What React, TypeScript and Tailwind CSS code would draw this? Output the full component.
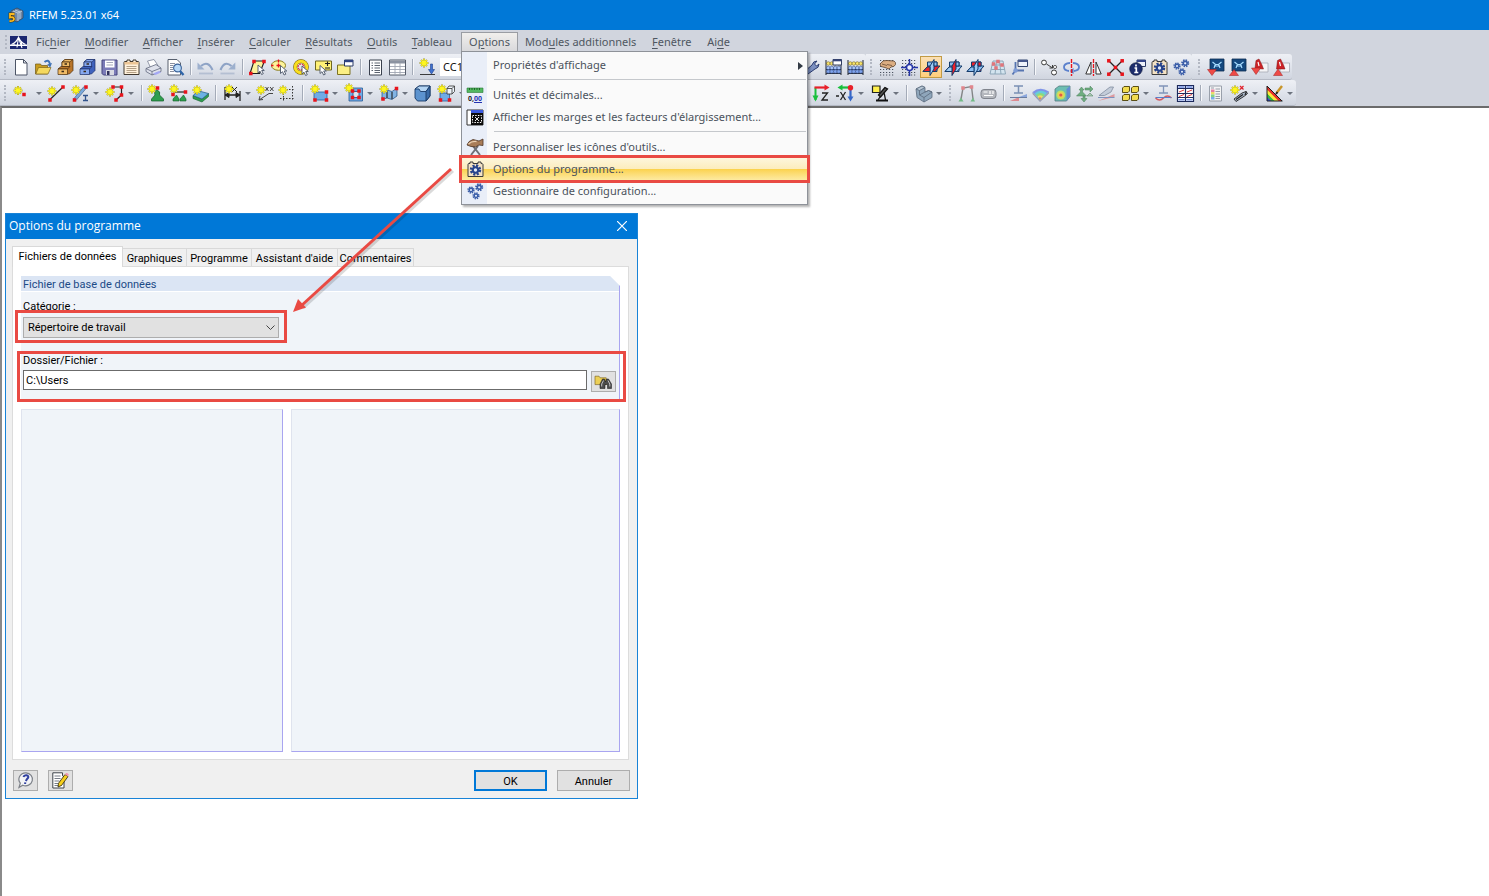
import type { ReactNode } from "react";

/* ---------- small drawing helpers ---------- */

function Star({ x = 0, y = 0 }: { x?: number; y?: number }) {
  return (
    <g transform={`translate(${x} ${y})`}>
      <path d="M4 -.5v9M-.5 4h9M1 1l6 6M7 1l-6 6" stroke="#a39a3a" strokeWidth="2" />
      <path d="M4 0v8M0 4h8M1.300 1.300l5.400 5.400M6.700 1.300l-5.400 5.400" stroke="#fff71e" strokeWidth="1.300" />
    </g>
  );
}

function Dots({ at, c = "#e8141c" }: { at: number[][]; c?: string }) {
  return (
    <>
      {at.map(([x, y]) => (
        <rect key={`${x}-${y}`} x={x - 1.75} y={y - 1.75} width="3.5" height="3.5" fill={c} />
      ))}
    </>
  );
}

function Cursor({ x = 0, y = 0 }: { x?: number; y?: number }) {
  return (
    <path
      transform={`translate(${x} ${y})`}
      d="M0 0v8l2-1.800 1.600 3.300 1.700-.8L3.700 5.500h2.600z"
      fill="#fff"
      stroke="#4a5568"
      strokeWidth=".9"
    />
  );
}

function Gear({ x, y, r, c = "#3a5da8" }: { x: number; y: number; r: number; c?: string }) {
  return (
    <>
      <circle cx={x} cy={y} r={r} fill="none" stroke={c} strokeWidth={r * 0.6} strokeDasharray={`${r * 0.47} ${r * 0.315}`} />
      <circle cx={x} cy={y} r={r * 0.62} fill="#e6eefb" stroke={c} strokeWidth={r * 0.5} />
    </>
  );
}

function Plane({ front, flat, side }: { front: string; flat: string; side: string }) {
  return (
    <g stroke="#123a6b" strokeWidth="1" strokeLinejoin="round">
      <path d="M4.500 3h9.500v9.500H4.500z" fill={front} />
      <path d="M0 12.500l5-5.500h12l-5 5.500z" fill={flat} />
      <path d="M7 7l4-6.500V10l-4 6.500z" fill={side} />
      <path d="M11 7h3V3h-3z" fill={front} />
      <path d="M0 12.500L4 8h3v4.500z" fill={flat} />
    </g>
  );
}

function Cabinet({ a, b, line }: { a: string; b: string; line: string }) {
  return (
    <g stroke={line} strokeWidth=".7" strokeLinejoin="round">
      <path d="M5 3l3-2.500h8V11.500L12.500 15H5z" fill={b} />
      <path d="M5 3l3-2.500h8L12.500 3z" fill={a} />
      <path d="M5 3h7.500v4.500H5z" fill={a} />
      <path d="M1 10l3-2.500h9L10.500 10z" fill={b} />
      <path d="M1 10h9.500v5.500H1z" fill={a} />
      <path d="M7.500 5h2.500M4.500 12.500h2.500" stroke="#3a2a18" strokeWidth="1.300" />
    </g>
  );
}

function Abacus({ flap }: { flap?: boolean }) {
  return (
    <g>
      <path d="M1 1v15M16 1v15M1 4.500h15M1 10.500h15M1 14.500h15" stroke="#2c3442" strokeWidth="1.100" />
      {[3.3, 6.8, 10.3, 13.8].map((x) => (
        <g key={x}>
          <circle cx={x} cy="4.500" r="1.800" fill="#f7e368" stroke="#66571d" strokeWidth=".5" />
          <circle cx={x} cy="9" r="1.800" fill="#a9c4f6" stroke="#1f3b80" strokeWidth=".5" />
          <circle cx={x} cy="12.500" r="1.800" fill="#7fa3ea" stroke="#1f3b80" strokeWidth=".5" />
        </g>
      ))}
      {flap && <path d="M8 .5h8.500v5.500H8z" fill="#fff" stroke="#323f63" />}
      {flap && <path d="M8 .5h8.500v1.800H8z" fill="#36457a" />}
    </g>
  );
}

function NavyModule() {
  return (
    <>
      <path d="M3 0h14v12H3z" fill="#14487f" stroke="#0b2c52" strokeWidth=".8" />
      <path d="M5.500 3l3 2.500h3L14.500 3M8.500 5.500L7 9M11.500 5.500L13 9M7 7h6" stroke="#a6dcff" strokeWidth="1.200" fill="none" />
    </>
  );
}

const gridDots = (
  <path
    d="M1 1.500h15M1 4.500h15M1 7.500h15M1 10.500h15M1 13.500h15M1 16h15"
    stroke="#4b5360"
    strokeWidth="1.200"
    strokeDasharray="1.200 1.800"
  />
);

const programGear = (
  <>
    <path d="M1 3.500q0-1 1-1h1V1h3v1.500h5V1h3v1.500q2 0 2 1v12H1z" fill="#f5e3c4" stroke="#3b3b3b" />
    <Gear x={8.5} y={9} r={4.400} c="#27448c" />
  </>
);

const threeGears = (
  <>
    <Gear x={4} y={7} r={2.800} />
    <Gear x={12.2} y={4.300} r={3.100} />
    <Gear x={9} y={12.800} r={2.800} />
  </>
);

const folder = <path d="M0 4h5l1.500 2H14v8.500H0z" fill="#eccf55" stroke="#79601a" strokeWidth=".8" />;

const icons: Record<string, ReactNode> = {
  newFile: <path d="M2.500.5h8l3.500 3.500v12H2.500zM10.500.5V4H14" fill="#fff" stroke="#4c5566" />,
  open: (
    <>
      <path d="M.5 5h5l1 1.500h6V15H.5z" fill="#c89c1e" stroke="#6f5714" strokeWidth=".7" />
      <path d="M3.500 8.500h12.500L13 15H.8z" fill="#f5d95f" stroke="#80661c" strokeWidth=".7" />
      <path d="M9.500 3q4-3.500 5.500 2" fill="none" stroke="#3f72b5" strokeWidth="2" />
      <path d="M17 4l-1.800 4.500-3-3z" fill="#3f72b5" />
    </>
  ),
  cabinet: <Cabinet a="#efba66" b="#b9752a" line="#4c2f10" />,
  cabinetBlue: <Cabinet a="#86a8ef" b="#3f62bd" line="#1e2f66" />,
  save: (
    <>
      <path d="M1 1h15v15H2.500L1 14.500z" fill="#7c7cb8" stroke="#45457c" />
      <path d="M4 1.500h9.500v7H4z" fill="#fff" />
      <path d="M5.500 3.500h6.500M5.500 6h6.500" stroke="#a5a8ba" />
      <path d="M5 11h8v5H5z" fill="#d9dbe3" />
      <path d="M6 12h2.500v4H6z" fill="#30315c" />
    </>
  ),
  clipboard: (
    <>
      <path d="M1 3.500q0-1 1-1h2V1h3v1.500h3V1h3v1.500h2q1 0 1 1v12H1z" fill="#fff1dc" stroke="#40382e" />
      <path d="M1.500 3h14v2.500h-14z" fill="#ecc595" />
      <path d="M3.500 7.500h10M3.500 9.500h10M3.500 11.500h10M3.500 13.500h10" stroke="#a08a6e" strokeWidth=".8" />
    </>
  ),
  print: (
    <g strokeLinejoin="round">
      <path d="M2.500 2L9 .5l4 6-7 3z" fill="#fff" stroke="#7a8196" strokeWidth=".8" />
      <path d="M1 9.500L11 5.500l5 3.500v3.500L7 16l-6-3.500z" fill="#dfe2ec" stroke="#60677c" strokeWidth=".8" />
      <path d="M1 9.500L7 12.500 16 9M7 12.500V16" fill="none" stroke="#60677c" strokeWidth=".8" />
      <path d="M8 14.500l6-2.500 2 1.500-5.500 2.500z" fill="#a4a8f4" />
    </g>
  ),
  preview: (
    <>
      <path d="M1 .5h9L13.500 4v12H1z" fill="#fff" stroke="#59616f" />
      <path d="M3 4.500h5M3 6.500h3.500M3 8.500h3M3 10.500h3M3 12.500h4" stroke="#8a90a0" />
      <circle cx="10.500" cy="9" r="3.900" fill="#b7d8f8" stroke="#3c6299" strokeWidth="1.100" />
      <path d="M13 12l3.500 4" stroke="#2f65a8" strokeWidth="2.400" />
    </>
  ),
  undo: (
    <>
      <path d="M4 7q7-6 11.500 4" fill="none" stroke="#8ea3c6" strokeWidth="2.200" />
      <path d="M.5 3.500v7h7z" fill="#9db0ce" />
      <path d="M2 14.500h14" stroke="#b4bfd2" strokeWidth="1.800" />
    </>
  ),
  redo: (
    <>
      <path d="M12.500 7Q5.500 1 1.500 11" fill="none" stroke="#8ea3c6" strokeWidth="2.200" />
      <path d="M16.300 3.500v7H9.300z" fill="#9db0ce" />
      <path d="M1.500 14.500h14" stroke="#b4bfd2" strokeWidth="1.800" />
    </>
  ),
  selPara: (
    <>
      <path d="M5 2h10.500L10.500 14.500H1z" fill="#fdf49a" stroke="#1d1d1d" strokeWidth="1.100" />
      <Dots at={[[5, 2.500], [15, 2.500], [1.800, 14.500]]} />
      <Cursor x={9} y={6} />
    </>
  ),
  selEllipse: (
    <>
      <ellipse cx="7.500" cy="6.500" rx="7" ry="4.800" fill="#fdf49a" stroke="#8a7b1d" />
      <path d="M7.500 4.500v4M5.500 6.500h4M7.500 .5v3M0 6.500h2.500" stroke="#e8141c" strokeWidth="1.300" />
      <Cursor x={9.500} y={6.500} />
    </>
  ),
  selRing: (
    <>
      <circle cx="8" cy="8" r="5.800" fill="none" stroke="#6d5a00" strokeWidth="4" />
      <circle cx="8" cy="8" r="5.800" fill="none" stroke="#f9de20" strokeWidth="3" />
      <circle cx="8" cy="8" r="3" fill="none" stroke="#e0202a" strokeWidth="1.200" strokeDasharray="2 1" />
      <Cursor x={9} y={7} />
    </>
  ),
  selPlus: (
    <>
      <path d="M.5 2h16v9H.5z" fill="#fff176" stroke="#6f6721" />
      <path d="M10 4.500h5M12.500 2.500v4.500M10 9h5" stroke="#1d1d1d" strokeWidth="1.100" />
      <Cursor x={5} y={6.500} />
    </>
  ),
  selWindow: (
    <>
      <path d="M.5 6h12.500v9.500H.5z" fill="#fbef84" stroke="#7d7323" />
      <path d="M7.500 1h8.500v6H7.500z" fill="#fff" stroke="#2b3a66" />
      <path d="M7.500 1h8.500v2.200H7.500z" fill="#2e4384" />
    </>
  ),
  listPage: (
    <>
      <path d="M2.500 1h12v15h-12z" fill="#fff" stroke="#39404d" />
      <path d="M4.500 4H6M4.500 6.500H6M4.500 9H6M4.500 11.500H6M7.500 4H13M7.500 6.500H13M7.500 9H13M7.500 11.500H13M7.500 13.500H13" stroke="#4b525f" strokeWidth=".9" />
    </>
  ),
  table: (
    <>
      <path d="M.5 1h16v15H.5z" fill="#fff" stroke="#555c69" />
      <path d="M1 1.500h15v3H1z" fill="#8c93a1" />
      <path d="M1 7.500h15M1 10.500h15M1 13.500h15M6 4v12M11 4v12" stroke="#a0a6b2" strokeWidth=".9" />
    </>
  ),
  newLoad: (
    <>
      <Star x={1} y={0} />
      <path d="M11.500 5v5.500H9.500l3 4.500 3-4.500h-2V5z" fill="#3e70cf" stroke="#1e3f8c" strokeWidth=".6" />
      <path d="M1 15.500h15" stroke="#3b3b3b" />
    </>
  ),
  wrench: <path d="M2 12l7-6q1-4 5-4l-2.500 3 2 2L16 5q0 4-4 5l-7 5z" fill="#7b8fc0" stroke="#2b3c70" />,
  abacusFlap: <Abacus flap />,
  abacus: <Abacus />,
  gridHand: (
    <>
      {gridDots}
      <path d="M1 5q3-4.500 7-3.500l7 .5q2 1 1.500 3.500-1 2.500-4.500 2.500L10 10 6 8.500 2 7.500z" fill="#dcae82" stroke="#5a4330" strokeWidth=".8" />
      <path d="M8 5.500l5 1M3 5l5 1.500" stroke="#6b4c34" strokeWidth=".8" />
    </>
  ),
  gridCross: (
    <>
      {gridDots}
      <path d="M8.500 0v17M0 8.500h17" stroke="#2636a8" strokeWidth="1.500" />
      <circle cx="8.500" cy="8.500" r="3" fill="#eef2ff" stroke="#2636a8" strokeWidth="1.500" />
    </>
  ),
  planeXY: <Plane front="#8dbff0" flat="#ee2028" side="#9dcbf4" />,
  planeYZ: <Plane front="#8dbff0" flat="#9dcbf4" side="#ee2028" />,
  planeXZ: <Plane front="#ee2028" flat="#8dbff0" side="#9dcbf4" />,
  gridPersp: (
    <>
      <path d="M4 2h10l2.500 13H1zM3.300 6h11.500M2.300 10.500h13.200M7.500 2L6 15M10.500 2L12 15" fill="#d3e4ef" stroke="#86a0b3" strokeWidth=".9" />
      <Dots at={[[4.500, 5], [9, 2.500], [13, 6], [7, 9]]} c="#e0767c" />
    </>
  ),
  axesWindow: (
    <>
      <path d="M7 1h9.500v6.500H7z" fill="#eef2fb" stroke="#33446f" />
      <path d="M7 1h9.500v2H7z" fill="#46578c" />
      <path d="M4.500 3v8.500H13M4.500 11.500l-3 4" fill="none" stroke="#5674b0" strokeWidth="1.800" />
      <circle cx="4.500" cy="11.500" r="2.200" fill="#7f9cd6" />
    </>
  ),
  circlesLink: (
    <>
      <circle cx="3" cy="3.500" r="2.400" fill="#fff" stroke="#3b3b3b" />
      <circle cx="13" cy="13.500" r="2.500" fill="#fff" stroke="#3b3b3b" />
      <path d="M5.500 5l6 4M11.500 9V6M11.500 9H8.500" fill="none" stroke="#3b3b3b" />
      <circle cx="14" cy="8" r="1.600" fill="#fff" stroke="#3b3b3b" strokeWidth=".8" />
    </>
  ),
  rotate: (
    <>
      <path d="M7 4Q1 4.500 1 8t5 4M10 4q6 .5 6 4t-5 4" fill="none" stroke="#5b80cc" strokeWidth="1.800" />
      <path d="M10.500 9v6L7 12z" fill="#4b72c4" />
      <path d="M8.500 0v17" stroke="#e8141c" strokeWidth="1.400" strokeDasharray="4 1" />
    </>
  ),
  mirror: (
    <>
      <path d="M6 3v12H.8zM11 3v12h5.200z" fill="#fff" stroke="#333" />
      <path d="M8.500 0v17" stroke="#e8141c" strokeWidth="1.300" strokeDasharray="4 1" />
    </>
  ),
  crossNodes: (
    <>
      <path d="M1.500 1.500l14 14M15.500 1.500l-14 14" stroke="#222" strokeWidth="1.300" />
      <Dots at={[[1.800, 1.800], [15.200, 1.800], [1.800, 15.200], [15.200, 15.200], [8.500, 8.500]]} />
    </>
  ),
  info: (
    <>
      <path d="M8 1h8.500v6.500H8z" fill="#eef1fa" stroke="#2b3a66" />
      <path d="M8 1h8.500v2H8z" fill="#34458a" />
      <circle cx="7" cy="10" r="6.300" fill="#1c2c6c" stroke="#0e1738" strokeWidth=".6" />
      <path d="M7 5.500v2M5.500 9H7.300V13.500M5.300 13.500h4" stroke="#fff" strokeWidth="1.700" fill="none" />
    </>
  ),
  programGear,
  threeGears,
  mod1: (
    <>
      <NavyModule />
      <path d="M.5 10.500h9L5 16.500z" fill="#ee4a46" stroke="#a11e1e" strokeWidth=".5" />
    </>
  ),
  mod2: (
    <>
      <NavyModule />
      <path d="M.5 16.500h9L5 10.500z" fill="#ee4a46" stroke="#a11e1e" strokeWidth=".5" />
    </>
  ),
  pdf1: (
    <>
      <path d="M8 4h9v9H8z" fill="#f4f4f6" stroke="#a6a9b4" strokeWidth=".8" />
      <path d="M4 9.500L5 1.500 8 0l3 6 1.500 4z" fill="#cc2226" stroke="#7d1214" strokeWidth=".5" />
      <path d="M7 3l1 4" stroke="#fff" strokeWidth="1.200" />
      <path d="M.5 9h9L5 15.500z" fill="#ee4a46" stroke="#a11e1e" strokeWidth=".5" />
    </>
  ),
  pdf2: (
    <>
      <path d="M7 4h9.500v9H7z" fill="#f4f4f6" stroke="#a6a9b4" strokeWidth=".8" />
      <path d="M3.500 10L4.500 1.500 7.500 0l3 6 1.500 4z" fill="#cc2226" stroke="#7d1214" strokeWidth=".5" />
      <path d="M6.500 3l1 4" stroke="#fff" strokeWidth="1.200" />
      <path d="M.5 16.500h9L5 10z" fill="#ee4a46" stroke="#a11e1e" strokeWidth=".5" />
    </>
  ),

  node: (
    <>
      <Star x={-1} y={1.5} />
      <Dots at={[[9, 9.500]]} />
    </>
  ),
  line: (
    <>
      <path d="M2 14.500L15 2" stroke="#222" strokeWidth="1.200" />
      <Star x={0} y={2} />
      <Dots at={[[2, 15], [15, 2]]} />
    </>
  ),
  member: (
    <>
      <path d="M1.500 14L12 1.500l2.500 1.500L4 15.500z" fill="#79a9dc" stroke="#47658e" strokeWidth=".7" />
      <Star x={0} y={1} />
      <Dots at={[[14, 2], [2.500, 15]]} />
      <path d="M11 10.500h5M13.500 10.500v5M11 15.500h5" stroke="#31538b" strokeWidth="1.300" />
    </>
  ),
  polyline: (
    <>
      <path d="M5.500 2h9v8L9 15" fill="none" stroke="#222" strokeWidth="1.200" />
      <Star x={-1} y={3} />
      <Dots at={[[6, 2], [14.500, 2], [14.500, 10], [9, 15]]} />
    </>
  ),
  support: (
    <>
      <path d="M9 5q4 1.500 2.500 5l4 4v2h-12v-2l3.500-4Q5.500 6 9 5z" fill="#2f9e4e" stroke="#115c28" strokeWidth=".7" />
      <Star x={0} y={0} />
      <Dots at={[[9.500, 3]]} />
    </>
  ),
  lineSupport: (
    <>
      <path d="M3 7h12" stroke="#222" strokeWidth="1.200" />
      <Star x={0} y={0} />
      <Dots at={[[15.500, 7], [3, 9.500]]} />
      <path d="M6.500 10l2.500 4v2H3v-2zM13.500 10l2.500 4v2h-6v-2z" fill="#2f9e4e" stroke="#115c28" strokeWidth=".6" />
    </>
  ),
  surfSupport: (
    <>
      <path d="M1 10.500L10 14l6.500-5.500v3L10 17l-9-3.500z" fill="#2f9e4e" stroke="#115c28" strokeWidth=".6" />
      <path d="M1 10.500l6-4.500 9.500 2.500L10 14z" fill="#6cb2e4" stroke="#215a80" strokeWidth=".7" />
      <Star x={1} y={1} />
    </>
  ),
  dimension: (
    <>
      <path d="M1 2v13M16 6v10M1 10h15" stroke="#222" strokeWidth="1.300" />
      <path d="M1 10l4-2.500v5zM16 10l-4-2.500v5zM8 2l5 5M13 2L8 7" stroke="#222" fill="#222" />
      <Star x={1} y={0} />
    </>
  ),
  annotate: (
    <>
      <path d="M2 15L12 8.500h4M2 15l1-4M2 15l4-.5" stroke="#444" fill="none" />
      <path d="M8.500 2l3 4M11.500 2l-3 4M13 2l3.500 4M16.500 2L13 6" stroke="#333" strokeWidth=".9" />
      <Star x={0} y={1} />
    </>
  ),
  gridNew: (
    <>
      <path d="M4.500 2v14M13.500 1v15M1 4.500h15M1 13.500h15" stroke="#333" strokeDasharray="1.500 1.500" />
      <Star x={0} y={1} />
    </>
  ),
  surface: (
    <>
      <path d="M3 7h13v8H3z" fill="#6fabe6" stroke="#2a5c96" strokeWidth=".8" />
      <Star x={0} y={0} />
      <Dots at={[[15.500, 7], [15.500, 15], [4, 15]]} />
    </>
  ),
  opening: (
    <>
      <path d="M3 3h13.500v13H3z" fill="#6fabe6" stroke="#2a5c96" strokeWidth=".8" />
      <path d="M7 6.500h6v6H7z" fill="#dfe6f0" stroke="#1f4a7d" strokeWidth=".8" />
      <Star x={-1} y={-1} />
      <Dots at={[[6.500, 6], [13, 6], [6.500, 12.500], [13, 12.500]]} />
    </>
  ),
  surfaceMember: (
    <>
      <path d="M1 6.500l5-1.500 5 1.500L16 3v8l-5 3.500L6 13l-5 1.500z" fill="#82b4e4" stroke="#1f4a7d" strokeWidth=".7" />
      <path d="M6 13V6M11 14V7" stroke="#222" strokeWidth="1.100" />
      <Star x={-1} y={0} />
      <Dots at={[[15.500, 3.500], [2, 14]]} />
    </>
  ),
  solid: (
    <g stroke="#183a66" strokeWidth=".9" strokeLinejoin="round">
      <path d="M1 4l4-3h11v10L12 16H3.500L1 13z" fill="#5c93cf" />
      <path d="M1 4h4l1.500 2.500H12L16 1H5z" fill="#b4d5f4" />
      <path d="M12 6.500V16l4-5V1z" fill="#3a6ca8" />
    </g>
  ),
  solidNew: (
    <>
      <path d="M2 8h9.500v8H2z" fill="#6fabe6" stroke="#2a5c96" strokeWidth=".8" />
      <path d="M9 3.500h5V9H9zM9 3.500l2-2.500h5.500v5.500L14 9M14 3.500L16.500 1" fill="#eef4fb" stroke="#333" strokeWidth=".8" />
      <Star x={0} y={0} />
      <Dots at={[[11.500, 15], [2.500, 15]]} />
    </>
  ),
  viewZ: (
    <>
      <path d="M2.500 15V2.500" stroke="#18c03c" strokeWidth="2" />
      <path d="M1.500 2.500H13" stroke="#e8202a" strokeWidth="2.200" />
      <path d="M11.500 -.5l5 3-5 3z" fill="#e8202a" />
      <path d="M-.5 10.500h6L2.500 16.500z" fill="#18c03c" />
      <path d="M9 8h5.500L9 15h6" fill="none" stroke="#222" strokeWidth="1.300" />
    </>
  ),
  viewX: (
    <>
      <path d="M13.500 2.500H4" stroke="#18c03c" strokeWidth="2.200" />
      <path d="M5.500 -.5l-5 3 5 3z" fill="#18c03c" />
      <path d="M13.500 3v10" stroke="#3567c8" strokeWidth="2.200" />
      <path d="M10.500 11.500h6l-3 5z" fill="#3567c8" />
      <circle cx="13.500" cy="2.800" r="2.700" fill="#e8202a" />
      <path d="M-1 11h3M3.500 7l5 8M8.500 7l-5 8" stroke="#222" strokeWidth="1.300" />
    </>
  ),
  lamp: (
    <>
      <path d="M13 2.500L6.500 10l2 2L15.500 4zM8 12l-2 3M12 7l1.500 8" stroke="#111" strokeWidth="1.300" fill="#555" />
      <path d="M4 15.500h12" stroke="#111" strokeWidth="2" />
      <path d="M.5 1H8v6.500H.5z" fill="#fff04e" stroke="#222" strokeWidth="1.200" />
    </>
  ),
  solidGray: (
    <g stroke="#5b6a7c" strokeWidth=".8" strokeLinejoin="round">
      <path d="M1 4l6-3 3 1.500V7l3.500-1.500L17 7v5.500L9 17l-7-4.500z" fill="#8fa6bb" />
      <path d="M1 4l6-3 3 1.500-5.500 3z" fill="#b8c8d6" />
      <path d="M4.500 5.500V10L9 12.500l8-5.500-3.500-1.500L10 7l-5.500 3M9 12.500V17" fill="none" />
    </g>
  ),
  frame: (
    <g opacity=".75">
      <path d="M3 14L5 3l8.500-1.500L15 14" fill="none" stroke="#666" strokeWidth="1.400" />
      <Dots at={[[5, 3], [13.500, 2]]} c="#e0666c" />
      <path d="M.5 16.500l2.500-4 2.500 4zM12.500 16.500l2.500-4 2 4z" fill="#53b068" />
    </g>
  ),
  capsule: (
    <>
      <rect x="1" y="4.500" width="15" height="9" rx="3" fill="#b5b8be" stroke="#80848d" />
      <path d="M3.500 7h4M4 10.500h9M10 6v3M13 6v3" stroke="#fff" strokeWidth="1.200" />
    </>
  ),
  beamWedge: (
    <>
      <path d="M4 1h9M8.500 1v7M4 8h9" stroke="#7a90b4" strokeWidth="1.500" />
      <path d="M0 16l9-4v4z" fill="#dd8a90" />
      <path d="M9 12l8-3v3z" fill="#8aa6dd" />
      <path d="M0 12.500h17" stroke="#6a7da0" />
    </>
  ),
  rainbow: (
    <g opacity=".85" strokeWidth="0">
      <path d="M.5 7Q8 1 17 6.500L8 15.500z" fill="#6f86e8" />
      <path d="M2.500 8.500Q8 3.500 15 8L8 15z" fill="#55c8d8" />
      <path d="M4 10q4.500-4 9 0L8 15z" fill="#7edb6a" />
      <path d="M5.500 11.500q2.500-2.500 5.500 0L8 15z" fill="#f4dc50" />
      <path d="M6.500 13q1.500-1.500 3 0L8 15z" fill="#ea6a50" />
      <path d="M.5 7L8 15.500 17 6.500v2L8 17 .5 9z" fill="#8b8fa8" />
    </g>
  ),
  heatCube: (
    <g opacity=".85">
      <path d="M1 4l4-3h11v10.500L12.500 16H1z" fill="#58b7a8" stroke="#3c6a70" strokeWidth=".8" />
      <path d="M12.500 4L16 1v10.500L12.500 16z" fill="#4a7fd0" />
      <circle cx="6.800" cy="10" r="4.500" fill="#b8e04c" />
      <circle cx="6.800" cy="10" r="3" fill="#f4c93a" />
      <circle cx="6.800" cy="10" r="1.600" fill="#e0432e" />
    </g>
  ),
  reactions: (
    <g fill="#6fae80" stroke="#4a7d5a" strokeWidth=".5">
      <path d="M5.500 2l2.500 3H6.500v2l4 4H.5l4-4V5H3z" />
      <path d="M9 3h5V1l3 3-3 3V5H9zM8 17l-3-3.500h2V11h2v2.500h2z" />
      <path d="M14 8l3 3h-6z" fill="#a9c7b2" />
    </g>
  ),
  wedgePlane: (
    <>
      <path d="M1 10.500L12 2h3.500l-2.500 5-6.500 3.500z" fill="#c3ccd9" stroke="#828da0" strokeWidth=".8" />
      <path d="M0 16L16.500 9v3z" fill="#dd9aa0" />
      <path d="M0 12.500h16.500" stroke="#7f93bd" />
    </>
  ),
  yellowPanels: (
    <g fill="#f2dc50" stroke="#4b3f08" strokeWidth=".9">
      <path d="M.5 3L2 1.500h5.500V6L6 7.500H.5zM9.500 3L11 1.500h5.500V6L15 7.500H9.500zM.5 11L2 9.500h5.500V14L6 15.500H.5zM9.500 11l1.500-1.500h5.500V14L15 15.500H9.500z" />
    </g>
  ),
  beamCurve: (
    <>
      <path d="M4 1h9M8.500 1v7M4 8h9" stroke="#8094b8" strokeWidth="1.300" />
      <path d="M.5 13q4 4 8 0t8 0" fill="none" stroke="#d65a60" strokeWidth="1.400" />
      <path d="M.5 12.500h16" stroke="#5b7dc8" />
    </>
  ),
  resultTable: (
    <>
      <path d="M.5.5h16v16H.5z" fill="#fff" stroke="#1d2a5c" strokeWidth="1.200" />
      <path d="M1 3.500h15.500M1 8.500h15.500M1 12.500h15.500M8.500 0v17" stroke="#1d2a5c" strokeWidth="1.200" />
      <path d="M2 7l5-2M10 7l5-2M2 11.500l5-2M10 11.500l5-2" stroke="#d8343a" />
      <path d="M1.500 2h6M9.500 2h6M1.500 14.700h6M9.500 14.700h6" stroke="#6c8ae0" strokeWidth="1.600" />
    </>
  ),
  colorList: (
    <g opacity=".85">
      <path d="M2.500 1h12v15h-12z" fill="#f7f7f7" stroke="#8e95a1" />
      <path d="M8.500 4H13M8.500 6.500H13M8.500 9H13M8.500 11.500H13M8.500 13.500H13M4 3h3" stroke="#8b919c" />
      <path d="M4 4.500h3.500V7H4z" fill="#e86a94" />
      <path d="M4 7h3.500v2.500H4z" fill="#f0d850" />
      <path d="M4 9.500h3.500v2.500H4z" fill="#74cf74" />
      <path d="M4 12h3.500v2.500H4z" fill="#6aa5e8" />
    </g>
  ),
  penStar: (
    <>
      <path d="M3 14l8-6 4-1.500 1.500 2-3 2.500L5 16.500z" fill="#a9b6c8" stroke="#222" strokeWidth=".9" />
      <path d="M5 14.500l7-5M15.500 6.500l-1.500 3.500" stroke="#222" strokeWidth="1.200" />
      <path d="M9 1l3.500 3.500M12.500 1L9 4.500" stroke="#e0202a" strokeWidth="1.200" />
      <Star x={0} y={1} />
    </>
  ),
  colorBand: (
    <>
      <path d="M1 1v15h15z" fill="#e8322c" />
      <path d="M1 4.500L12.500 16H8L1 9z" fill="#f8ea3c" />
      <path d="M1 8.500L8.500 16H5L1 12z" fill="#2fbe48" />
      <path d="M1 12l4 4H1z" fill="#2a50d8" />
      <path d="M1 1v15h15.500M1 1l15 15" stroke="#1c1c1c" fill="none" />
      <path d="M16 1l-5.500 7" stroke="#c8952a" strokeWidth="2.400" fill="none" />
      <path d="M11.500 7L10 9" stroke="#222" strokeWidth="1.800" />
    </>
  ),

  units: (
    <>
      <path d="M0 1h16v4.500H0z" fill="#52b860" stroke="#2a7a36" strokeWidth=".6" />
      <path d="M2.500 1v2M5 1v2M7.500 1v2M10 1v2M12.500 1v2" stroke="#14501e" strokeWidth=".8" />
    </>
  ),
  margins: (
    <>
      <path d="M0 1h16v15H0z" fill="#fff" stroke="#333" />
      <path d="M4 1h12v3H4z" fill="#3c5be0" />
      <path d="M4 4h12v12H4z" fill="#0b0b0b" />
      <path d="M5.500 6.500h9v7h-9z" fill="none" stroke="#fff" strokeDasharray="1.500 1.200" />
      <path d="M8 8l4 4M12 8l-4 4" stroke="#fff" strokeWidth=".9" />
    </>
  ),
  hammer: (
    <>
      <path d="M4 16l7-9M13 16L6 7" stroke="#6d6f76" strokeWidth="2" />
      <path d="M0 6q1-4 6-5.500l6 1.500L16 0v6.500l-4-.5q-3 3-8 1.500z" fill="#a97d58" stroke="#4b3424" strokeWidth=".8" />
      <path d="M1.500 5q3-3 8-2.500" stroke="#ecd2b4" strokeWidth="1.300" fill="none" />
    </>
  ),
  find: (
    <>
      <g transform="scale(.8)">{folder}</g>
      <path d="M5 15.500V11l2.500-5h2l1 3 1-3h2l3 5v4.500h-4V11.500h-2.500v4z" fill="#4c4c4c" stroke="#111" strokeWidth=".5" />
      <path d="M6.700 13.500V11L8.500 7.500M14.800 13.500V11L13 7.500" stroke="#c0c0c0" fill="none" strokeWidth="1" />
    </>
  ),
  help: (
    <>
      <path d="M9 .8a6.800 6.500 0 1 1-3.200 12.400L2 15.500l1.300-4.300A6.800 6.500 0 0 1 9 .8z" fill="#f2f3f6" stroke="#7c8088" strokeWidth="1.200" />
      <path d="M6.500 5q.5-2 3-1.700 2.500.5 1.600 2.500Q10 7 8.800 9M8.300 10.300l-.2 1.700" stroke="#3040a0" strokeWidth="2" fill="none" />
    </>
  ),
  edit: (
    <>
      <path d="M.8.8h9.700v3L12 5v11H.8z" fill="#fff" stroke="#3e434c" />
      <path d="M2.500 4h6M2.500 6.500h6M2.500 9h5M2.500 11.500h4M2.500 13.500h7" stroke="#777d88" />
      <path d="M13 2.500l3 2-6.500 9-3.500 1.500.5-3.700z" fill="#f6cf1c" stroke="#2c2408" strokeWidth=".8" />
      <path d="M13 2.500l1-1.500q2-.5 2.800 1.500L16 4.500z" fill="#f09ab0" />
    </>
  ),
};

function Icon({ name }: { name: string }) {
  return (
    <svg viewBox="0 0 17 17" className="size-[17px] shrink-0 overflow-visible" aria-hidden="true">
      {icons[name]}
    </svg>
  );
}

/* ---------- toolbars ---------- */

function Grip() {
  return <span className="mx-1 h-4 w-0 shrink-0 border-l-2 border-dotted border-[#b3b8c3]" />;
}

function Tool({ name, active = false }: { name: string; active?: boolean }) {
  return (
    <button
      type="button"
      aria-label={name}
      aria-pressed={active}
      className={
        active
          ? "flex h-[22px] w-[22px] shrink-0 items-center justify-center border border-[#c29b45] bg-linear-to-b from-[#fbe0b4] to-[#ffcf7c]"
          : "flex h-[22px] w-[22px] shrink-0 items-center justify-center"
      }
    >
      <Icon name={name} />
    </button>
  );
}

function SplitTool({ name }: { name: string }) {
  return (
    <button type="button" aria-label={name} className="flex h-[22px] w-[35px] shrink-0 items-center justify-between pr-[3px] pl-[5px]">
      <Icon name={name} />
      <span className="border-x-[3px] border-t-[3px] border-x-transparent border-t-[#6d737e]" />
    </button>
  );
}

function Tools({ list }: { list: string }) {
  return (
    <>
      {list.split(" ").map((item, i) => {
        if (item === "|")
          return (
            <span key={i} className="flex w-2 shrink-0 justify-center">
              <span className="h-4 w-px bg-[#a4abb8] shadow-[1px_0_0_#f7f8fb]" />
            </span>
          );
        if (item.endsWith("+")) return <SplitTool key={i} name={item.slice(0, -1)} />;
        if (item.endsWith("!")) return <Tool key={i} name={item.slice(0, -1)} active />;
        return <Tool key={i} name={item} />;
      })}
    </>
  );
}

function Strip({ children, wide = false }: { children: ReactNode; wide?: boolean }) {
  return (
    <div
      role="toolbar"
      className={`${wide ? "w-[866px]" : ""} flex h-[26px] shrink-0 items-center rounded-r-[3px] border-b border-[#b4b9c4] bg-linear-to-b from-[#eef0f5] via-[#e0e4ec] to-[#d0d5df] pt-px`}
    >
      {children}
    </div>
  );
}

/* ---------- menu ---------- */

function MenuLabel({ text }: { text: string }) {
  const [before, key, after] = text.split("_");
  return (
    <>
      {before}
      <span className="underline underline-offset-2">{key}</span>
      {after}
    </>
  );
}

function MenuEntry({ icon, text, selected = false, submenu = false }: { icon?: string; text: string; selected?: boolean; submenu?: boolean }) {
  return (
    <button
      type="button"
      role="menuitem"
      className={
        selected
          ? "relative flex h-[22px] w-full items-center bg-linear-to-b from-[#fdf6dc] to-[#fbe39a] pt-px text-left"
          : "relative flex h-[22px] w-full items-center pt-px text-left"
      }
    >
      {selected && <span className="absolute inset-x-0 bottom-0 h-[11px] bg-linear-to-b from-[#fbd24a] to-[#fdeaa0]" />}
      <span className="relative flex w-[26px] shrink-0 items-center justify-center">
        {icon && <Icon name={icon} />}
        {icon === "units" && (
          <span className="absolute top-1.5 text-[7px] leading-3 font-bold text-[#222]">
            0,<span className="text-[#2433b0] underline">00</span>
          </span>
        )}
      </span>
      <span className="relative grow pl-[5px] whitespace-nowrap">{text}</span>
      {submenu && <span className="mr-1 border-y-4 border-l-[5px] border-y-transparent border-l-[#333b45]" />}
      {selected && <span className="absolute -inset-x-[3px] -inset-y-[3px] border-[3px] border-[#e94a43]" />}
    </button>
  );
}

function MenuRule() {
  return (
    <div className="flex h-2 flex-col pt-[3px] pl-8">
      <span className="mr-px h-px bg-[#c5c8cc]" />
    </div>
  );
}

function OptionsMenu() {
  return (
    <div
      role="menu"
      className="absolute top-full left-0 z-20 w-[347px] border border-[#8e9299] bg-[#fafafa] bg-[linear-gradient(to_right,#e9eef8_25px,#fafafa_25px)] py-[2px] text-[11px] text-[#4a525c] shadow-[2px_2px_2px_rgba(0,0,0,0.3)]"
    >
      <MenuEntry text="Propriétés d'affichage" submenu />
      <MenuRule />
      <MenuEntry icon="units" text="Unités et décimales..." />
      <MenuEntry icon="margins" text="Afficher les marges et les facteurs d'élargissement..." />
      <MenuRule />
      <MenuEntry icon="hammer" text="Personnaliser les icônes d'outils..." />
      <MenuEntry icon="programGear" text="Options du programme..." selected />
      <MenuEntry icon="threeGears" text="Gestionnaire de configuration..." />
    </div>
  );
}

const menusBefore = ["Fic_h_ier", "_M_odifier", "_A_fficher", "_I_nsérer", "_C_alculer", "_R_ésultats", "_O_utils", "_T_ableau"];
const menusAfter = ["Mod_u_les additionnels", "_F_enêtre", "Ai_d_e"];

function MenuBar() {
  return (
    <nav className="flex h-6 items-center bg-[#d1d5de] pl-[5px] text-[11px] text-[#4f5761]">
      <span className="h-3.5 border-l-2 border-dotted border-[#b3b8c3]" />
      <svg viewBox="0 0 17 13" className="ml-[3px] h-[13px] w-[17px]" aria-hidden="true">
        <path d="M0 0h17v13H0z" fill="#1b2770" />
        <path d="M0 8.500h17v1.500H0z" fill="#fff" />
        <path d="M1.500 8.500q5-2 7-7 2 5 7 7" stroke="#fff" strokeWidth="1.300" fill="none" />
        <path d="M8.500 1.500L7 11.500M8.500 1.500L12 12M4 7.500V10M11.500 5.500v4" stroke="#fff" strokeWidth="1.100" fill="none" />
      </svg>
      <div className="ml-[9px] flex w-[416px] justify-between">
        {menusBefore.map((m) => (
          <button key={m} type="button">
            <MenuLabel text={m} />
          </button>
        ))}
      </div>
      <div className="ml-[9px] self-start pt-[2px]">
        <div className="relative">
          <button
            type="button"
            aria-expanded="true"
            className="block h-[19px] w-[57px] border border-b-0 border-[#9a9da3] bg-linear-to-b from-[#f1efec] to-[#d9d9dc]"
          >
            <MenuLabel text="O_p_tions" />
          </button>
          <OptionsMenu />
        </div>
      </div>
      <div className="ml-[7px] flex w-[205px] justify-between">
        {menusAfter.map((m) => (
          <button key={m} type="button">
            <MenuLabel text={m} />
          </button>
        ))}
      </div>
    </nav>
  );
}

/* ---------- dialog ---------- */

const tabs = [
  { label: "Graphiques", width: "w-[64px]" },
  { label: "Programme", width: "w-[65px]" },
  { label: "Assistant d'aide", width: "w-[86px]" },
  { label: "Commentaires", width: "w-[76px]" },
];

function Dialog() {
  return (
    <section
      role="dialog"
      aria-label="Options du programme"
      className="absolute top-[105px] left-[3px] flex h-[586px] w-[633px] flex-col border border-[#1883d7] bg-[#f0f0f0] font-['Roboto','Liberation_Sans',sans-serif] text-[12px] text-black"
    >
      <header className="flex h-[25px] shrink-0 items-center justify-between bg-[#0078d7] pr-2.5 pl-[3px] font-['Open_Sans','Noto_Sans',sans-serif] text-white">
        <h2 className="pb-px">Options du programme</h2>
        <button type="button" aria-label="Fermer">
          <svg viewBox="0 0 10 10" className="mb-px size-2.5" aria-hidden="true">
            <path d="M0 0l10 10M10 0L0 10" stroke="#fff" strokeWidth="1.200" />
          </svg>
        </button>
      </header>

      <div className="flex grow flex-col pt-[7px] pr-2 pl-1.5 text-[11px]">
        <div role="tablist" className="flex items-end">
          <button type="button" role="tab" aria-selected="true" className="relative z-10 -mb-px h-[21px] w-[111px] border border-b-0 border-[#d9d9d9] bg-white">
            Fichiers de données
          </button>
          {tabs.map((t) => (
            <button
              key={t.label}
              type="button"
              role="tab"
              aria-selected="false"
              className={`${t.width} h-[18px] border border-b-0 border-l-0 border-[#d9d9d9] pt-[2px] leading-[14px] whitespace-nowrap`}
            >
              {t.label}
            </button>
          ))}
        </div>

        <div className="flex grow flex-col gap-[7px] border border-[#dcdcdc] bg-white px-2 pt-[9px] pb-[7px]">
          <fieldset className="relative h-[126px] border-r border-[#a9a5f0] bg-[#f0f4f9] [clip-path:polygon(0_0,589px_0,100%_10px,100%_100%,0_100%)]">
            <h3 className="h-4 border-b border-white bg-[#dbe5f4] pt-px pl-0.5 leading-[15px] text-[#1c4a86]">Fichier de base de données</h3>
            <div className="flex flex-col pt-2 pl-0.5">
              <label htmlFor="category" className="leading-[14px]">Catégorie :</label>
              <div className="relative mt-[3px] h-[21px] w-[256px]">
                <select id="category" className="h-full w-full appearance-none border border-[#adadad] bg-[#e1e1e1] pt-px pl-1">
                  <option>Répertoire de travail</option>
                </select>
                <svg viewBox="0 0 9 5" className="pointer-events-none absolute top-2 right-1 h-[5px] w-[9px]" aria-hidden="true">
                  <path d="M.5.5l4 4 4-4" stroke="#444" fill="none" />
                </svg>
              </div>
              <label htmlFor="path" className="mt-[15px] leading-[15px]">Dossier/Fichier :</label>
              <div className="mt-[2px] flex items-start gap-1 pr-[3px]">
                <input id="path" defaultValue="C:\Users" className="h-5 min-w-0 grow border border-[#6b6b6b] bg-white px-0.5" />
                <button type="button" aria-label="Parcourir" className="mt-px flex h-[21px] w-[25px] items-center justify-center border border-[#adadad] bg-[#e1e1e1]">
                  <Icon name="find" />
                </button>
              </div>
            </div>
          </fieldset>
          <div className="flex grow gap-2">
            <div className="w-[262px] border border-t-[#dfe3ee] border-r-[#a9a5f0] border-b-[#a9a5f0] border-l-[#dfe3ee] bg-[#f0f4f9]" />
            <div className="grow border border-t-[#dfe3ee] border-r-[#a9a5f0] border-b-[#a9a5f0] border-l-[#dfe3ee] bg-[#f0f4f9]" />
          </div>
        </div>

        <footer className="-mr-px flex h-[38px] items-start gap-2.5 pt-2.5 pl-px">
          <button type="button" aria-label="Aide" className="flex h-[21px] w-[25px] items-center justify-center border border-[#adadad] bg-[#e1e1e1]">
            <Icon name="help" />
          </button>
          <button type="button" aria-label="Commentaire" className="flex h-[21px] w-[25px] items-center justify-center border border-[#adadad] bg-[#e1e1e1]">
            <Icon name="edit" />
          </button>
          <button type="button" className="ml-auto h-[21px] w-[73px] border-2 border-[#0078d7] bg-[#e1e1e1] pt-[2px] leading-[15px]">OK</button>
          <button type="button" className="h-[21px] w-[73px] border border-[#adadad] bg-[#e1e1e1] pt-[2px] leading-[17px]">Annuler</button>
        </footer>
      </div>

      <div className="pointer-events-none absolute top-[96px] left-[9px] h-[33px] w-[272px] border-[3px] border-[#e94a43]" />
      <div className="pointer-events-none absolute top-[137px] left-[11px] h-[51px] w-[609px] border-[3px] border-[#e94a43]" />
    </section>
  );
}

/* ---------- window ---------- */

export default function App() {
  return (
    <div className="relative flex min-h-screen flex-col overflow-hidden bg-white font-['Noto_Sans','Open_Sans',sans-serif]">
      <header className="flex h-[30px] items-center gap-[5px] bg-[#0078d7] pl-2 text-[11px] text-white">
        <svg viewBox="0 0 16 16" className="size-4" aria-hidden="true">
          <path d="M3 4l6-3 6 3v7l-6 4-6-3z" fill="#6f87a6" stroke="#34485f" strokeWidth=".8" />
          <path d="M5 4l5 2 4-2M10 6v8M7 3l5 2M12 5v7" stroke="#c2d0e0" fill="none" strokeWidth=".9" />
          <path d="M6.500 7H2v3.500q4-1 4 1.500t-4.500 2" stroke="#4e3605" strokeWidth="2.800" fill="none" />
          <path d="M6.500 7H2v3.500q4-1 4 1.500t-4.500 2" stroke="#f9b91f" strokeWidth="1.800" fill="none" />
        </svg>
        <h1>RFEM 5.23.01 x64</h1>
      </header>

      <MenuBar />

      <div className="flex flex-col bg-[#d1d5de]">
        <div className="flex">
          <Strip wide>
            <Grip />
            <Tools list="newFile open cabinet cabinetBlue save clipboard print preview | undo redo | selPara selEllipse selRing selPlus selWindow | listPage table | newLoad" />
            <select aria-label="Cas de charge" className="ml-[2px] h-[18px] w-[220px] appearance-none bg-white px-[3px] text-[11px] text-[#111]">
              <option>CC1</option>
            </select>
            <span className="grow" />
            <Tools list="wrench abacusFlap abacus" />
          </Strip>
          <Strip>
            <Grip />
            <Tools list="gridHand gridCross planeXY! planeYZ planeXZ gridPersp axesWindow | circlesLink rotate mirror crossNodes info programGear threeGears" />
          </Strip>
          <Strip>
            <span className="w-0.5" />
            <Grip />
            <Tools list="mod1 mod2 pdf1 pdf2" />
          </Strip>
        </div>
        <div className="flex">
          <div className="flex w-[945px]">
            <Strip>
              <Grip />
              <Tools list="node+ line member+ polyline+ | support lineSupport surfSupport | dimension+ annotate gridNew | surface+ opening+ surfaceMember+ solid solidNew+" />
            </Strip>
            <div className="flex h-[26px] grow items-center justify-end border-b border-[#b4b9c4] bg-linear-to-b from-[#eef0f5] via-[#e0e4ec] to-[#d0d5df] pt-px">
              <Tools list="viewZ viewX+ lamp+ | solidGray+" />
            </div>
          </div>
          <Strip>
            <Grip />
            <Tools list="frame capsule | beamWedge rainbow heatCube reactions wedgePlane yellowPanels+ beamCurve resultTable | colorList penStar+ colorBand+" />
          </Strip>
        </div>
      </div>

      <main className="relative grow border-t-2 border-l-2 border-t-[#6b6b6b] border-l-[#8a8a8a] bg-white">
        <Dialog />
      </main>

      <svg viewBox="0 0 180 160" className="pointer-events-none absolute top-[160px] left-[285px] z-30 h-[160px] w-[180px]" aria-hidden="true">
        <path d="M168 11L18 148" stroke="#000" strokeWidth="3" opacity=".14" />
        <path d="M166 9L16 146" stroke="#e94a43" strokeWidth="3" />
        <path d="M8 152l5-13 8 8.500z" fill="#e94a43" />
      </svg>
    </div>
  );
}
